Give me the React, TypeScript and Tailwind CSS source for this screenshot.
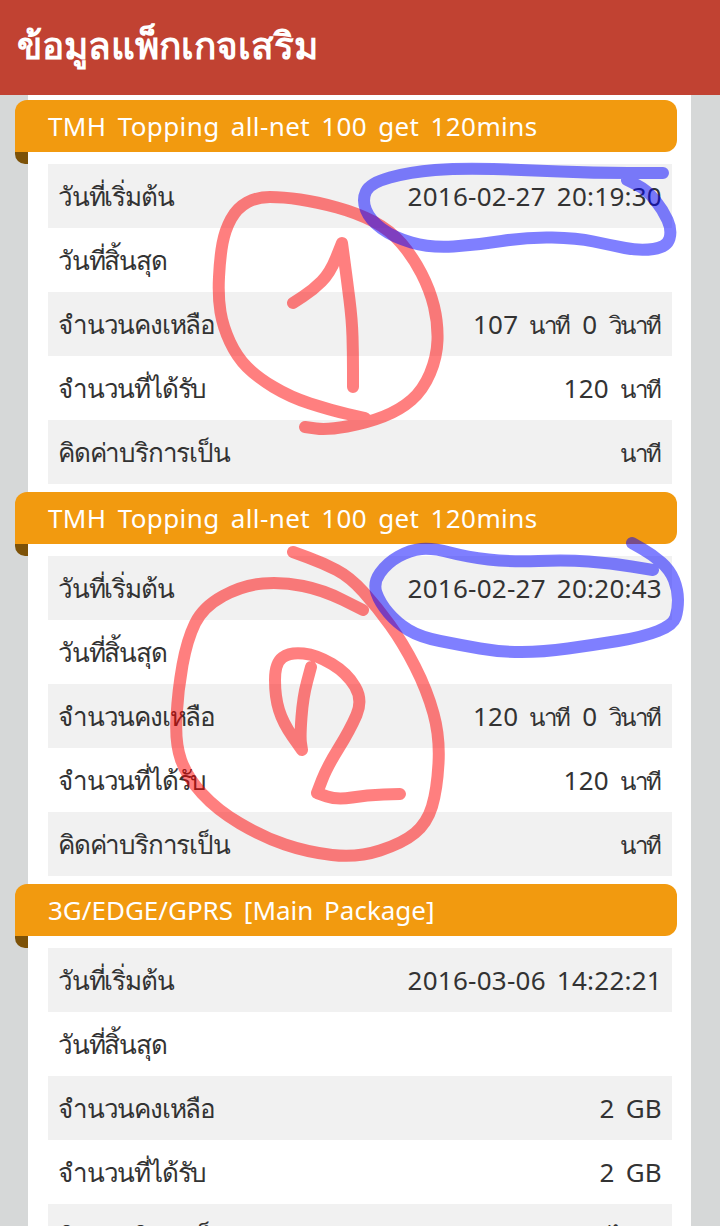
const rows = ["วันที่เริ่มต้น", "วันที่สิ้นสุด", "จำนวนคงเหลือ", "จำนวนที่ได้รับ", "คิดค่าบริการเป็น"];

const packages = [
  { name: "TMH Topping all-net 100 get 120mins", nameClass: "tracking-[0.4px]", values: ["2016-02-27 20:19:30", "", "107 นาที 0 วินาที", "120 นาที", "นาที"] },
  { name: "TMH Topping all-net 100 get 120mins", nameClass: "tracking-[0.4px]", values: ["2016-02-27 20:20:43", "", "120 นาที 0 วินาที", "120 นาที", "นาที"] },
  { name: "3G/EDGE/GPRS [Main Package]", nameClass: "", values: ["2016-03-06 14:22:21", "", "2 GB", "2 GB", "ไป 1"] },
];

type Pt = [number, number];

// hand drawn pen strokes, smoothed through the midpoints (a repeated point makes a corner)
function smooth(pts: Pt[]) {
  let d = `M${pts[0][0]} ${pts[0][1]}`;
  for (let i = 1; i < pts.length - 1; i++) {
    const mx = (pts[i][0] + pts[i + 1][0]) / 2;
    const my = (pts[i][1] + pts[i + 1][1]) / 2;
    d += ` Q${pts[i][0]} ${pts[i][1]} ${mx} ${my}`;
  }
  const last = pts[pts.length - 1];
  return d + ` L${last[0]} ${last[1]}`;
}

const blue: Pt[][] = [
  [[663, 173], [663, 173], [593, 173], [527, 170], [460, 168], [410, 172], [370, 183], [362, 200], [370, 220], [393, 237], [430, 248], [477, 245], [527, 237], [577, 238], [610, 245], [640, 251], [667, 247], [672, 230], [663, 210], [647, 190], [627, 180]],
  [[632, 543], [632, 543], [653, 555], [670, 570], [678, 590], [678, 610], [673, 625], [643, 637], [593, 645], [543, 652], [500, 652], [460, 645], [420, 637], [397, 623], [380, 603], [373, 583], [387, 563], [410, 550], [433, 548], [467, 557], [510, 562], [567, 560], [610, 563], [653, 570], [653, 570]],
];

const red: Pt[][] = [
  [[305, 427], [305, 427], [327, 430], [367, 423], [400, 410], [423, 390], [437, 357], [438, 323], [430, 290], [413, 257], [390, 230], [357, 213], [317, 202], [283, 197], [257, 197], [237, 208], [225, 230], [220, 257], [218, 297], [223, 327], [237, 357], [257, 377], [290, 397], [330, 410], [365, 418], [365, 418]],
  [[293, 303], [293, 303], [313, 290], [330, 273], [342, 243], [342, 243], [347, 280], [352, 320], [353, 353], [353, 387], [353, 387]],
  [[293, 552], [293, 552], [323, 563], [350, 577], [377, 607], [403, 643], [427, 690], [440, 737], [437, 790], [427, 823], [403, 843], [357, 858], [307, 852], [263, 837], [217, 810], [187, 777], [175, 743], [178, 690], [187, 640], [203, 607], [243, 585], [283, 582], [323, 590], [363, 610], [363, 610]],
  [[311, 667], [311, 667], [303, 697], [300, 737], [302, 750], [302, 750], [283, 723], [275, 697], [275, 663], [290, 652], [317, 655], [347, 673], [363, 700], [350, 730], [327, 767], [317, 793], [317, 793], [337, 800], [367, 795], [400, 794], [400, 794]],
];

function Scribbles() {
  return (
    <svg className="absolute left-0 top-0" width="720" height="1226" fill="none" strokeWidth="12" strokeLinecap="round" strokeLinejoin="round">
      {red.map((s, i) => (
        <path key={i} d={smooth(s)} stroke="#ff0000" strokeOpacity="0.5" />
      ))}
      {blue.map((s, i) => (
        <path key={i} d={smooth(s)} stroke="#0000ff" strokeOpacity="0.5" />
      ))}
    </svg>
  );
}

// the Thai in the reference is a narrower face than the one installed
function Value({ text }: { text: string }) {
  return (
    <span>
      {text.split(/([\u0E00-\u0E7F]+)/).map((part, i) => (
        <span key={i} className={i % 2 === 1 ? "mr-[1.5px] text-[24px] tracking-[-1.5px]" : "tracking-[0.25px]"}>
          {part}
        </span>
      ))}
    </span>
  );
}

export default function App() {
  return (
    <div className="relative h-[1226px] overflow-hidden bg-[#d6d8d8] font-['Noto_Sans','Open_Sans','Liberation_Sans',sans-serif] [word-spacing:4px]">
      <header className="flex h-[95px] items-center bg-[#c14232] pl-[17px] pb-[6px] text-[37px] font-bold text-white">
        ข้อมูลแพ็กเกจเสริม
      </header>
      <main className="ml-[28px] mr-[29px] bg-white pt-[5px]">
        {packages.map((pkg, i) => (
          <section key={i} className="mb-2">
            <div className={`relative -ml-[13px] mr-[14px] flex h-[52px] items-center rounded-t-[12px] rounded-br-[12px] bg-[#f29a0f] pl-[33px] text-[26px] text-white ${pkg.nameClass}`}>
              {pkg.name}
              <div className="absolute left-0 top-[52px] h-3 w-[13px] rounded-bl-[10px] bg-[#7d5208]" />
            </div>
            <div className="ml-[20px] mr-[19px] mt-3">
              {rows.map((label, j) => (
                <div key={j} className={`flex h-16 items-center justify-between px-[10px] text-[26px] text-[#333333] ${j % 2 === 0 ? "bg-[#f1f1f1]" : "bg-white"}`}>
                  <span className="tracking-[-1.2px]">{label}</span>
                  <Value text={pkg.values[j]} />
                </div>
              ))}
            </div>
          </section>
        ))}
      </main>
      <Scribbles />
    </div>
  );
}
